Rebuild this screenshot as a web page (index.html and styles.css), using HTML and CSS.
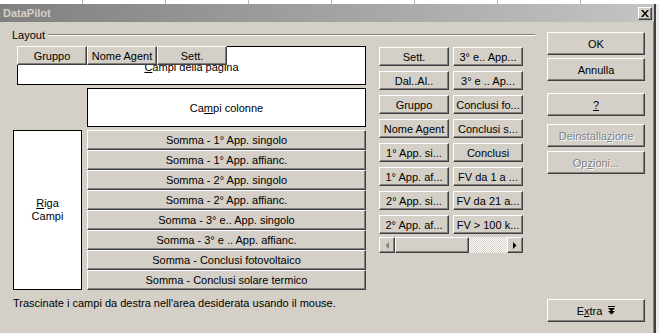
FILE: index.html
```html
<!DOCTYPE html>
<html lang="it">
<head>
    <meta charset="UTF-8">
    <title>DataPilot</title>
    <link rel="stylesheet" href="styles.css">
</head>
<body>
    <div class="sheet-strip"></div>

    <div class="dialog">
        <div class="titlebar">
            <span class="title">DataPilot</span>
            <span class="close-btn">
                <svg width="8" height="7" viewBox="0 0 8 7">
                    <path d="M0 0h2l2 2.5L6 0h2L5 3.5 8 7H6L4 4.5 2 7H0l3-3.5z" fill="#000"/>
                </svg>
            </span>
        </div>

        <div class="dialog-body">
            <div class="layout-group">
                <div class="group-header">
                    <span>Layout</span>
                    <span class="group-line"></span>
                </div>

                <div class="layout-main">
                    <div class="layout-area">
                        <div class="drop page-area">
                            <span class="page-label"><u>C</u>ampi della pagina</span>
                            <div class="page-fields">
                                <div class="btn3d field">Gruppo</div>
                                <div class="btn3d field">Nome Agent</div>
                                <div class="btn3d field">Sett.</div>
                            </div>
                        </div>

                        <div class="drop col-area"><span>Ca<u>m</u>pi colonne</span></div>

                        <div class="row-data">
                            <div class="drop row-area"><span><u>R</u>iga<br>Campi</span></div>
                            <div class="data-fields">
                                <div class="btn3d data-field">Somma - 1° App. singolo</div>
                                <div class="btn3d data-field">Somma - 1° App. affianc.</div>
                                <div class="btn3d data-field">Somma - 2° App. singolo</div>
                                <div class="btn3d data-field">Somma - 2° App. affianc.</div>
                                <div class="btn3d data-field">Somma - 3° e.. App. singolo</div>
                                <div class="btn3d data-field">Somma - 3° e .. App. affianc.</div>
                                <div class="btn3d data-field">Somma - Conclusi fotovoltaico</div>
                                <div class="btn3d data-field">Somma - Conclusi solare termico</div>
                            </div>
                        </div>
                    </div>

                    <div class="field-pool">
                        <div class="pool-grid">
                            <div class="btn3d field">Sett.</div>
                            <div class="btn3d field">3° e.. App...</div>
                            <div class="btn3d field">Dal..Al..</div>
                            <div class="btn3d field">3° e .. Ap...</div>
                            <div class="btn3d field">Gruppo</div>
                            <div class="btn3d field">Conclusi fo...</div>
                            <div class="btn3d field">Nome Agent</div>
                            <div class="btn3d field">Conclusi s...</div>
                            <div class="btn3d field">1° App. si...</div>
                            <div class="btn3d field">Conclusi</div>
                            <div class="btn3d field">1° App. af...</div>
                            <div class="btn3d field">FV da 1 a ...</div>
                            <div class="btn3d field">2° App. si...</div>
                            <div class="btn3d field">FV da 21 a...</div>
                            <div class="btn3d field">2° App. af...</div>
                            <div class="btn3d field">FV &gt; 100 k...</div>
                        </div>

                        <div class="hscroll">
                            <span class="btn3d sb-btn">
                                <svg width="4" height="7" viewBox="0 0 4 7">
                                    <path d="M4 0v7L0.5 3.5z" fill="#808080"/>
                                </svg>
                            </span>
                            <span class="btn3d sb-thumb"></span>
                            <span class="sb-track"></span>
                            <span class="btn3d sb-btn">
                                <svg width="4" height="7" viewBox="0 0 4 7">
                                    <path d="M0 0v7l3.5-3.5z" fill="#000"/>
                                </svg>
                            </span>
                        </div>
                    </div>
                </div>
            </div>

            <div class="actions">
                <div class="btn3d action">OK</div>
                <div class="btn3d action gap-sm">Annulla</div>
                <div class="btn3d action gap-lg"><u>?</u></div>
                <div class="btn3d action gap-md disabled"><span>Deinstalla<u>z</u>ione</span></div>
                <div class="btn3d action gap-xs disabled"><span>Op<u>z</u>ioni...</span></div>
            </div>
        </div>

        <div class="dialog-footer">
            <span class="hint">Trascinate i campi da destra nell'area desiderata usando il mouse.</span>
            <div class="btn3d action extra">
                <span>E<u>x</u>tra</span>
                <svg width="7" height="9" viewBox="0 0 7 9">
                    <rect x="0" y="0" width="7" height="1" fill="#000"/>
                    <path d="M0 2h7L3.5 5.5z M0 5h7L3.5 8.5z" fill="#000"/>
                </svg>
            </div>
        </div>
    </div>
</body>
</html>
```

FILE: styles.css
```css
:root {
    --face: #d4d0c8;
    --shadow: #808080;
    --dark: #404040;
    --light: #ffffff;
}

* {
    margin: 0;
    padding: 0;
    box-sizing: border-box;
}

body {
    width: 659px;
    height: 333px;
    overflow: hidden;
    background-color: #ececec;
    font-family: "Liberation Sans", Arial, sans-serif;
    font-size: 11px;
    color: #000;
}

/* spreadsheet peeking above the dialog */
.sheet-strip {
    height: 4px;
    background-color: #fff;
    background-image: repeating-linear-gradient(to right, transparent 0 82px, #b4b4b4 82px 83px);
}

.dialog {
    width: 656px;
    height: 329px;
    background-color: var(--face);
    border-right: 2px solid;
    border-right-color: var(--dark);
    box-shadow: inset -1px 0 var(--shadow);
}

.titlebar {
    height: 18px;
    display: flex;
    align-items: center;
    padding: 0 2px 0 3px;
    background: linear-gradient(to right, #808080, #c4c4c4);
}

.title {
    font-weight: 700;
    color: var(--face);
    flex: 1;
}

.close-btn {
    width: 14px;
    height: 13px;
    display: flex;
    align-items: center;
    justify-content: center;
    background-color: var(--face);
    border: 1px solid;
    border-color: var(--light) var(--dark) var(--dark) var(--light);
    box-shadow: inset -1px -1px var(--shadow);
    margin-top: 1px;
}

/* classic raised button */
.btn3d {
    display: flex;
    align-items: center;
    justify-content: center;
    background-color: var(--face);
    border: 1px solid;
    border-color: var(--light) var(--dark) var(--dark) var(--light);
    box-shadow: inset -1px -1px var(--shadow);
    white-space: nowrap;
    overflow: hidden;
}

.dialog-body {
    display: flex;
    padding-top: 7px;
}

.layout-group {
    margin-left: 12px;
    width: 523px;
}

.group-header {
    height: 12px;
    display: flex;
    align-items: center;
}

.group-line {
    flex: 1;
    height: 2px;
    margin-left: 3px;
    border-top: 1px solid var(--shadow);
    border-bottom: 1px solid var(--light);
}

.layout-main {
    display: flex;
    gap: 13px;
    padding-left: 1px;
}

.layout-area {
    width: 353px;
    margin-top: 5px;
    display: flex;
    flex-direction: column;
    gap: 3px;
}

.drop {
    background-color: #fff;
    border: 1px solid #000;
    display: flex;
    align-items: center;
    justify-content: center;
    text-align: center;
}

.page-area {
    position: relative;
    margin-left: 4px;
    width: 349px;
    height: 39px;
}

/* the label sits under the page field buttons, as in the original */
.page-label {
    margin-top: 3px;
}

.page-fields {
    position: absolute;
    top: -1px;
    left: -1px;
    display: flex;
}

.field {
    width: 70px;
    height: 19px;
}

.col-area {
    margin-left: 74px;
    width: 279px;
    height: 39px;
}

.row-data {
    display: flex;
    gap: 5px;
}

.row-area {
    width: 69px;
    height: 160px;
    line-height: 13px;
}

.data-fields {
    width: 279px;
    display: flex;
    flex-direction: column;
}

.data-field {
    height: 20px;
}

.field-pool {
    width: 144px;
    margin-top: 6px;
}

.pool-grid {
    display: grid;
    grid-template-columns: 70px 70px;
    grid-auto-rows: 19px;
    column-gap: 4px;
    row-gap: 5px;
}

.hscroll {
    display: flex;
    height: 16px;
    margin-top: 3px;
}

.sb-btn {
    width: 16px;
    height: 16px;
}

.sb-thumb {
    width: 74px;
    height: 16px;
}

.sb-track {
    flex: 1;
    background: repeating-conic-gradient(#fff 0 25%, var(--face) 0 50%) 0 0 / 2px 2px;
}

.actions {
    margin-left: 12px;
    margin-top: 3px;
    width: 98px;
    display: flex;
    flex-direction: column;
}

.action {
    height: 23px;
}

.gap-sm { margin-top: 3px; }
.gap-lg { margin-top: 12px; }
.gap-md { margin-top: 8px; }
.gap-xs { margin-top: 4px; }

.disabled {
    color: var(--shadow);
    text-shadow: 1px 1px 0 var(--light);
}

.dialog-footer {
    display: flex;
    align-items: flex-start;
    margin-top: 7px;
    padding: 0 9px 0 13px;
}

.hint {
    line-height: 13px;
}

.extra {
    width: 98px;
    margin-left: auto;
    margin-top: 2px;
    gap: 6px;
}
```
